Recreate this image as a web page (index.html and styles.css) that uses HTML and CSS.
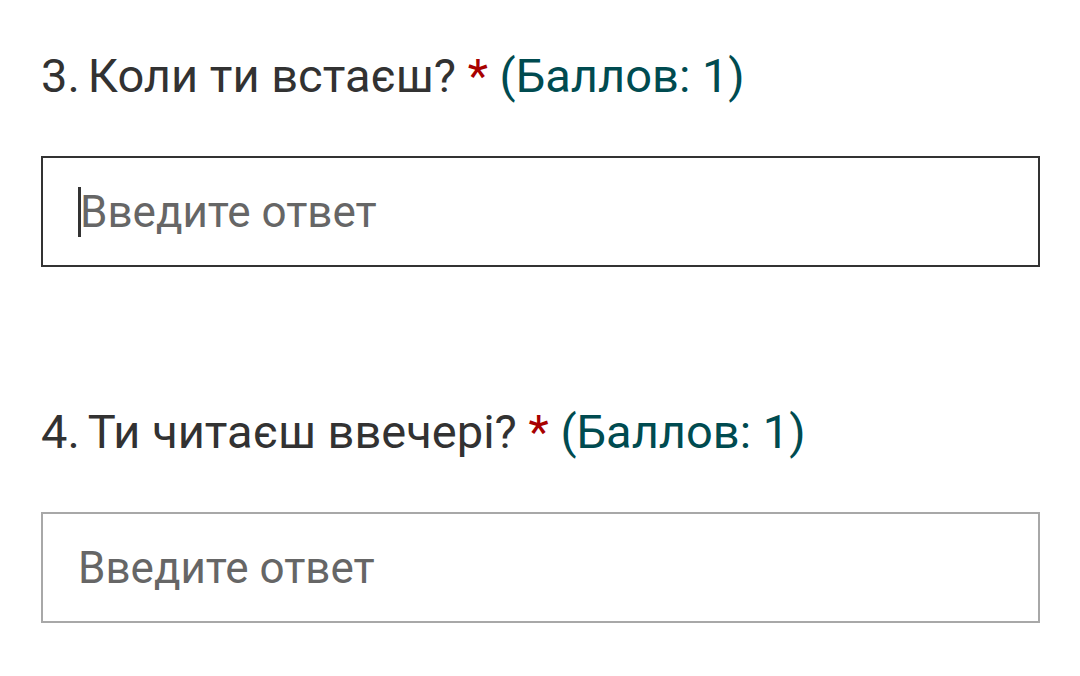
FILE: index.html
```html
<!DOCTYPE html>
<html lang="uk">
<head>
    <meta charset="UTF-8">
    <meta name="viewport" content="width=device-width, initial-scale=1.0">
    <title>Форма</title>
    <link rel="stylesheet" href="styles.css">
</head>
<body>

<section class="question">
    <div class="question-title">
        <span class="number">3.</span>Коли ти встаєш? <span class="required">*</span> <span class="points">(Баллов: 1)</span>
    </div>
    <div class="answer focused">
        <span class="caret"></span><span class="placeholder">Введите ответ</span>
    </div>
</section>

<section class="question">
    <div class="question-title">
        <span class="number">4.</span>Ти читаєш ввечері? <span class="required">*</span> <span class="points">(Баллов: 1)</span>
    </div>
    <div class="answer">
        <span class="placeholder">Введите ответ</span>
    </div>
</section>

</body>
</html>
```

FILE: styles.css
```css
body {
    font-family: Roboto, "Noto Sans", sans-serif;
    margin: 0;
    padding: 0;
    background-color: #fff;
    color: #333;
}
.question {
    padding: 0 40px 0 41px;
    margin-bottom: 135px;
}
.question:first-child {
    padding-top: 46px;
}
.question:last-child {
    margin-bottom: 0;
}
.question-title {
    font-size: 47px;
    line-height: 60px;
    color: #323232;
}
.number {
    margin-right: 8px;
}
.required {
    color: #a80000;
}
.points {
    color: #004b50;
}
.answer {
    margin-top: 50px;
    height: 107px;
    border: 2px solid #a8a8a8;
    display: flex;
    align-items: center;
    padding-left: 35px;
}
.answer.focused {
    border-color: #333;
}
.caret {
    width: 3px;
    height: 50px;
    background: #333;
    margin-right: -1px;
}
.placeholder {
    font-size: 44px;
    color: #666;
}
```
